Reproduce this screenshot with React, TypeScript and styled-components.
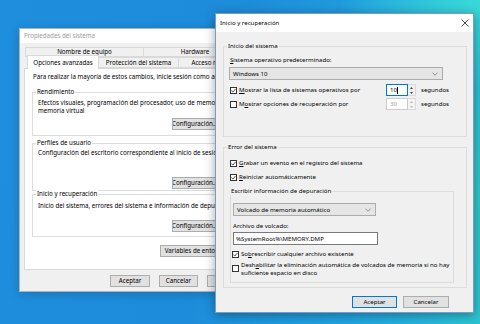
import React from 'react';
import styled, { createGlobalStyle } from 'styled-components';

const GlobalStyle = createGlobalStyle`
    html, body {
        margin: 0;
        padding: 0;
    }
    body {
        font-family: "Noto Sans", "Open Sans", sans-serif;
    }
`;

const Desktop = styled.div`
    position: relative;
    width: 480px;
    height: 324px;
    overflow: hidden;
    background:
        radial-gradient(ellipse 140px 90px at 100% 0%, rgba(60, 225, 215, 0.85), transparent),
        radial-gradient(ellipse 60px 200px at 100% 60%, rgba(50, 205, 190, 0.7), transparent),
        linear-gradient(100deg, #1f8fdd 0%, #1d8cda 45%, #22a3df 75%, #2bbfd8 100%);
    line-height: 8px;
    color: #000;
`;

const Window = styled.div<{ $left: number; $top: number; $width: number; $height: number; $z: number; $fs: number; $active?: boolean }>`
    position: absolute;
    z-index: ${p => p.$z};
    left: ${p => p.$left}px;
    top: ${p => p.$top}px;
    width: ${p => p.$width}px;
    height: ${p => p.$height}px;
    box-sizing: border-box;
    font-size: ${p => p.$fs}px;
    background: #f0f0f0;
    border: 1px solid ${p => p.$active ? '#7a9cc0' : '#a9b4bf'};
    box-shadow: 0 2px 10px rgba(0, 0, 0, ${p => p.$active ? 0.35 : 0.2});
    display: flex;
    flex-direction: column;
    overflow: hidden;
`;

const TitleBar = styled.div<{ $h: number; $inactive?: boolean }>`
    height: ${p => p.$h}px;
    flex: none;
    background: #fff;
    display: flex;
    align-items: center;
    justify-content: space-between;
    padding: 0 4px 0 4px;
    color: ${p => p.$inactive ? '#9a9a9a' : '#000'};
    white-space: nowrap;
`;

const CloseIcon = () => (
    <svg width="8" height="8" viewBox="0 0 8 8">
        <path d="M0.5 0.5 L7.5 7.5 M7.5 0.5 L0.5 7.5" stroke="#222" strokeWidth="0.8" fill="none" />
    </svg>
);

/* ---------- common controls ---------- */

const Button = styled.div<{ $w: number; $default?: boolean }>`
    box-sizing: border-box;
    width: ${p => p.$w}px;
    height: 12px;
    flex: none;
    background: #e1e1e1;
    border: 1px solid ${p => p.$default ? '#0078d7' : '#adadad'};
    display: flex;
    align-items: center;
    justify-content: center;
    white-space: nowrap;
    overflow: hidden;
`;

const Group = styled.div<{ $h: number; $w?: number }>`
    box-sizing: border-box;
    height: ${p => p.$h}px;
    width: ${p => p.$w ? `${p.$w}px` : 'auto'};
    flex: none;
    border: 1px solid #dcdcdc;
    display: flex;
    flex-direction: column;
    padding: 0 4px 0 6px;
`;

const GroupLabel = styled.div<{ $bg: string }>`
    margin: -5px 0 0 -3px;
    padding: 0 1px;
    align-self: flex-start;
    background: ${p => p.$bg};
    white-space: nowrap;
`;

const Text = styled.div<{ $mt?: number; $ml?: number }>`
    margin-top: ${p => p.$mt ?? 0}px;
    margin-left: ${p => p.$ml ?? 0}px;
    white-space: nowrap;
`;

const Key = styled.span`
    text-decoration: underline;
    text-underline-offset: 1px;
`;

const Box = styled.div`
    box-sizing: border-box;
    width: 7px;
    height: 7px;
    flex: none;
    border: 1px solid #333;
    background: #fff;
    display: flex;
    align-items: center;
    justify-content: center;
`;

const Check = ({ checked }: { checked?: boolean }) => (
    <Box>
        {checked && (
            <svg width="5" height="5" viewBox="0 0 5 5">
                <path d="M0.4 2.6 L1.9 4 L4.6 0.9" stroke="#222" strokeWidth="0.8" fill="none" />
            </svg>
        )}
    </Box>
);

const CheckRow = styled.div<{ $mt: number; $h?: number }>`
    display: flex;
    align-items: center;
    gap: 2px;
    height: ${p => p.$h ?? 10}px;
    margin-top: ${p => p.$mt}px;
    white-space: nowrap;
`;

const Chevron = () => (
    <svg width="6" height="4" viewBox="0 0 6 4">
        <path d="M0.5 0.8 L3 3.2 L5.5 0.8" stroke="#7a7a7a" strokeWidth="0.8" fill="none" />
    </svg>
);

const Select = styled.div<{ $w: number; $h: number; $mt: number; $ml?: number }>`
    box-sizing: border-box;
    width: ${p => p.$w}px;
    height: ${p => p.$h}px;
    margin-top: ${p => p.$mt}px;
    margin-left: ${p => p.$ml ?? 0}px;
    flex: none;
    background: #e5e5e5;
    border: 1px solid #acacac;
    display: flex;
    align-items: center;
    justify-content: space-between;
    padding: 0 4px 0 3px;
`;

const TextBox = styled.div<{ $w: number; $mt: number }>`
    box-sizing: border-box;
    width: ${p => p.$w}px;
    height: 13px;
    margin-top: ${p => p.$mt}px;
    background: #fff;
    border: 1px solid #7a7a7a;
    display: flex;
    align-items: center;
    padding-left: 2px;
    white-space: nowrap;
`;

/* ---------- spin box ---------- */

const SpinRow = styled.div<{ $mt: number }>`
    display: flex;
    align-items: center;
    height: 12px;
    margin-top: ${p => p.$mt}px;
    white-space: nowrap;
`;

const SpinLabel = styled.div`
    width: 156px;
    display: flex;
    align-items: center;
    gap: 2px;
`;

const SpinInput = styled.div<{ $focused?: boolean; $disabled?: boolean }>`
    box-sizing: border-box;
    width: 22px;
    height: 12px;
    background: #fff;
    border: 1px solid ${p => p.$focused ? '#0078d7' : '#cccccc'};
    color: ${p => p.$disabled ? '#a0a0a0' : '#000'};
    display: flex;
    align-items: center;
    padding-left: 3px;
`;

const Caret = styled.span`
    display: inline-block;
    width: 1px;
    height: 7px;
    background: #000;
    margin-left: 0.5px;
`;

const SpinArrows = styled.div<{ $disabled?: boolean }>`
    box-sizing: border-box;
    width: 8px;
    height: 12px;
    background: ${p => p.$disabled ? '#f4f4f4' : '#f0f0f0'};
    border: 1px solid #dadada;
    border-left: none;
    display: flex;
    flex-direction: column;
    align-items: center;
    justify-content: space-around;
    margin-right: 5px;
`;

const Arrows = ({ disabled }: { disabled?: boolean }) => (
    <SpinArrows $disabled={disabled}>
        <svg width="3" height="2" viewBox="0 0 3 2"><path d="M0 2 L1.5 0 L3 2 Z" fill={disabled ? '#bbb' : '#444'} /></svg>
        <svg width="3" height="2" viewBox="0 0 3 2"><path d="M0 0 L1.5 2 L3 0 Z" fill={disabled ? '#bbb' : '#444'} /></svg>
    </SpinArrows>
);

/* ---------- left window: tabs ---------- */

const LeftBody = styled.div`
    display: flex;
    flex-direction: column;
    padding: 4px 6px 0 4px;
    flex: 1;
`;

const TabRow = styled.div<{ $h: number; $pl: number }>`
    display: flex;
    height: ${p => p.$h}px;
    padding-left: ${p => p.$pl}px;
    align-items: flex-end;
`;

const Tab = styled.div<{ $w: number; $active?: boolean }>`
    box-sizing: border-box;
    width: ${p => p.$w}px;
    height: ${p => p.$active ? 'calc(100% + 3px)' : '100%'};
    margin-bottom: ${p => p.$active ? -1 : 0}px;
    flex: none;
    position: relative;
    z-index: ${p => p.$active ? 2 : 0};
    background: ${p => p.$active ? '#fff' : '#f0f0f0'};
    border: 1px solid #d9d9d9;
    border-bottom: ${p => p.$active ? 'none' : '1px solid #d9d9d9'};
    margin-right: -1px;
    display: flex;
    align-items: center;
    justify-content: center;
    white-space: nowrap;
    overflow: hidden;
`;

const Panel = styled.div`
    box-sizing: border-box;
    height: 202px;
    flex: none;
    background: #fff;
    border: 1px solid #d9d9d9;
    display: flex;
    flex-direction: column;
    padding: 4px 0 0 7px;
    position: relative;
    z-index: 1;
`;

const ButtonRow = styled.div<{ $mt: number; $pr: number; $gap: number }>`
    display: flex;
    justify-content: flex-end;
    gap: ${p => p.$gap}px;
    margin-top: ${p => p.$mt}px;
    padding-right: ${p => p.$pr}px;
`;

const RightAlign = styled.div<{ $mt: number; $mr?: number; $w?: number }>`
    display: flex;
    justify-content: flex-end;
    width: ${p => p.$w ? `${p.$w}px` : 'auto'};
    margin-top: ${p => p.$mt}px;
    margin-right: ${p => p.$mr ?? 0}px;
`;

function SystemProperties() {
    return (
        <Window $left={19} $top={28} $width={240} $height={264} $z={1} $fs={6.2}>
            <TitleBar $h={14} $inactive>Propiedades del sistema</TitleBar>
            <LeftBody>
                <TabRow $h={10} $pl={1}>
                    <Tab $w={119}>Nombre de equipo</Tab>
                    <Tab $w={104}>Hardware</Tab>
                </TabRow>
                <TabRow $h={11} $pl={3}>
                    <Tab $w={72} $active>Opciones avanzadas</Tab>
                    <Tab $w={81}>Protección del sistema</Tab>
                    <Tab $w={70}>Acceso remoto</Tab>
                </TabRow>
                <Panel>
                    <Text $ml={1}>Para realizar la mayoría de estos cambios, inicie sesión como administrador.</Text>

                    <Group $h={44} $w={190} style={{ marginTop: 11 }}>
                        <GroupLabel $bg="#fff">Rendimiento</GroupLabel>
                        <Text $mt={3} $ml={-1}>Efectos visuales, programación del procesador, uso de memoria y</Text>
                        <Text $ml={-1}>memoria virtual</Text>
                        <RightAlign $mt={3} $mr={-1}>
                            <Button $w={46}>Configuración...</Button>
                        </RightAlign>
                    </Group>

                    <Group $h={48} $w={190} style={{ marginTop: 7 }}>
                        <GroupLabel $bg="#fff">Perfiles de usuario</GroupLabel>
                        <Text $mt={2} $ml={-1}>Configuración del escritorio correspondiente al inicio de sesión</Text>
                        <RightAlign $mt={20} $mr={-1}>
                            <Button $w={46}>Configuración...</Button>
                        </RightAlign>
                    </Group>

                    <Group $h={43} $w={190} style={{ marginTop: 3 }}>
                        <GroupLabel $bg="#fff">Inicio y recuperación</GroupLabel>
                        <Text $mt={4} $ml={-1}>Inicio del sistema, errores del sistema e información de depuración</Text>
                        <RightAlign $mt={10} $mr={-1}>
                            <Button $w={46}>Configuración...</Button>
                        </RightAlign>
                    </Group>

                    <RightAlign $mt={8} $w={203}>
                        <Button $w={75}>Variables de entorno...</Button>
                    </RightAlign>
                </Panel>
                <ButtonRow $mt={5} $pr={5} $gap={9}>
                    <Button $w={40}>Aceptar</Button>
                    <Button $w={39}>Cancelar</Button>
                    <Button $w={40}>Aplicar</Button>
                </ButtonRow>
            </LeftBody>
        </Window>
    );
}

/* ---------- right window ---------- */

const RightBody = styled.div`
    display: flex;
    flex-direction: column;
    padding: 0 6px 0 7px;
    flex: 1;
`;

const Inner = styled(Group)`
    margin: 9px 8px 0 0;
    padding: 0 2px;
`;

function StartupRecovery() {
    return (
        <Window $left={215} $top={13} $width={259} $height={300} $z={2} $fs={6.1} $active>
            <TitleBar $h={18}>
                <span>Inicio y recuperación</span>
                <CloseIcon />
            </TitleBar>
            <RightBody>
                <Group $h={91} style={{ marginTop: 14 }}>
                    <GroupLabel $bg="#f0f0f0">Inicio del sistema</GroupLabel>
                    <Text $mt={6}><Key>S</Key>istema operativo predeterminado:</Text>
                    <Select $w={214} $h={13} $mt={3} $ml={-1}>
                        <span>Windows 10</span>
                        <Chevron />
                    </Select>
                    <SpinRow $mt={4}>
                        <SpinLabel>
                            <Check checked />
                            <span><Key>M</Key>ostrar la lista de sistemas operativos por</span>
                        </SpinLabel>
                        <SpinInput $focused>10<Caret /></SpinInput>
                        <Arrows />
                        <span>segundos</span>
                    </SpinRow>
                    <SpinRow $mt={2}>
                        <SpinLabel>
                            <Check />
                            <span>M<Key>o</Key>strar opciones de recuperación por</span>
                        </SpinLabel>
                        <SpinInput $disabled>30</SpinInput>
                        <Arrows disabled />
                        <span>segundos</span>
                    </SpinRow>
                </Group>

                <Group $h={141} style={{ marginTop: 10 }}>
                    <GroupLabel $bg="#f0f0f0">Error del sistema</GroupLabel>
                    <CheckRow $mt={7}>
                        <Check checked />
                        <span><Key>G</Key>rabar un evento en el registro del sistema</span>
                    </CheckRow>
                    <CheckRow $mt={4}>
                        <Check checked />
                        <span><Key>R</Key>einiciar automáticamente</span>
                    </CheckRow>

                    <Inner $h={92}>
                        <GroupLabel $bg="#f0f0f0">Escribir información de depuración</GroupLabel>
                        <Select $w={143} $h={13} $mt={8}>
                            <span>Volcado de memoria automático</span>
                            <Chevron />
                        </Select>
                        <Text $mt={6}>Archivo de volcado:</Text>
                        <TextBox $w={145} $mt={2}>%SystemRoot%\MEMORY.DMP</TextBox>
                        <CheckRow $mt={4} style={{ marginLeft: -1 }}>
                            <Check checked />
                            <span>So<Key>b</Key>rescribir cualquier archivo existente</span>
                        </CheckRow>
                        <CheckRow $mt={1} $h={17} style={{ marginLeft: -1 }}>
                            <Check />
                            <span>Desh<Key>a</Key>bilitar la eliminación automática de volcados de memoria si no hay<br />suficiente espacio en disco</span>
                        </CheckRow>
                    </Inner>
                </Group>

                <ButtonRow $mt={8} $pr={18} $gap={6}>
                    <Button $w={45} $default>Aceptar</Button>
                    <Button $w={46}>Cancelar</Button>
                </ButtonRow>
            </RightBody>
        </Window>
    );
}

export default function App() {
    return (
        <>
            <GlobalStyle />
            <Desktop>
                <SystemProperties />
                <StartupRecovery />
            </Desktop>
        </>
    );
}
